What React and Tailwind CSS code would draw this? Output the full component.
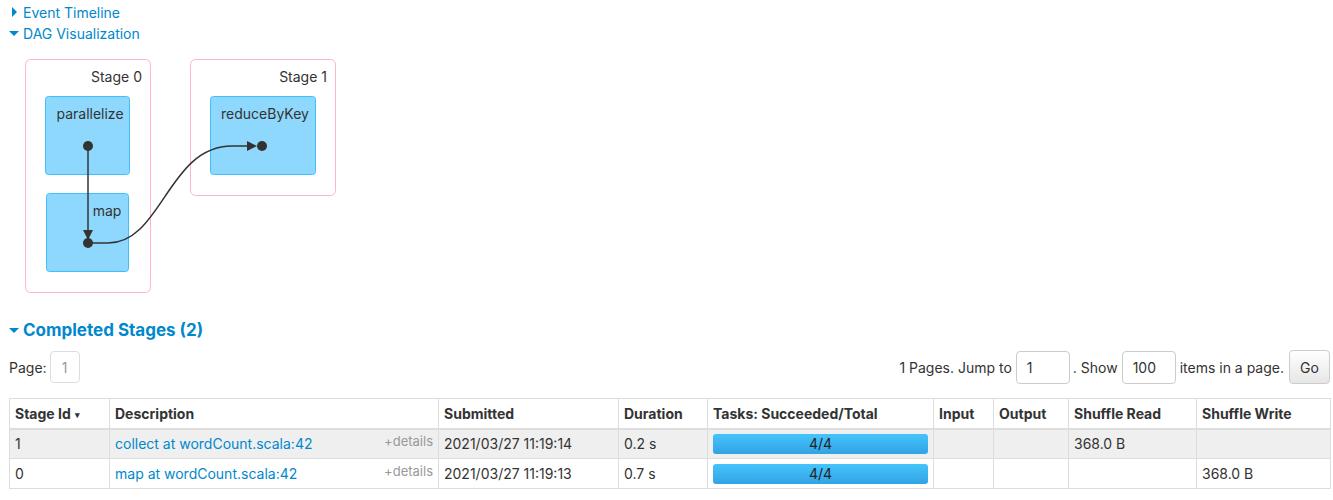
import { useState } from 'react';

const COLS = [
  { label: 'Stage Id', w: 'w-[100px]', sort: true },
  { label: 'Description', w: 'w-[329px]' },
  { label: 'Submitted', w: 'w-[180px]' },
  { label: 'Duration', w: 'w-[89px]' },
  { label: 'Tasks: Succeeded/Total', w: 'w-[226px]' },
  { label: 'Input', w: 'w-[60px]' },
  { label: 'Output', w: 'w-[75px]' },
  { label: 'Shuffle Read', w: 'w-[128px]' },
  { label: 'Shuffle Write', w: 'w-[134px]' },
];

const ROWS = [
  { id: '1', desc: 'collect at wordCount.scala:42', submitted: '2021/03/27 11:19:14', duration: '0.2 s', tasks: '4/4', read: '368.0 B', write: '' },
  { id: '0', desc: 'map at wordCount.scala:42', submitted: '2021/03/27 11:19:13', duration: '0.7 s', tasks: '4/4', read: '', write: '368.0 B' },
];

function Caret({ open }) {
  return open ? (
    <span className="inline-block w-0 h-0 border-l-[5px] border-r-[5px] border-t-[5px] border-l-transparent border-r-transparent border-t-[#0088cc]" />
  ) : (
    <span className="inline-block w-0 h-0 border-t-[5px] border-b-[5px] border-l-[5px] border-t-transparent border-b-transparent border-l-[#0088cc]" />
  );
}

function Dag() {
  return (
    <svg width="345" height="240" viewBox="9 55 345 240" className="block" style={{ fontFamily: 'Inter, sans-serif' }}>
      {/* stage clusters */}
      <rect x="25.5" y="59.5" width="125" height="233" rx="5" fill="#fff" stroke="#ffb6c4" />
      <rect x="190.5" y="59.5" width="145" height="136" rx="5" fill="#fff" stroke="#ffb6c4" />
      <text x="142" y="82" textAnchor="end" fontSize="14" fill="#333">Stage 0</text>
      <text x="327" y="82" textAnchor="end" fontSize="14" fill="#333">Stage 1</text>
      {/* rdd nodes */}
      <rect x="45.5" y="96.5" width="84" height="78" rx="3" fill="#8fd8fd" stroke="#3ec0ff" />
      <rect x="46.5" y="193.5" width="82" height="78" rx="3" fill="#8fd8fd" stroke="#3ec0ff" />
      <rect x="210.5" y="96.5" width="105" height="78" rx="3" fill="#8fd8fd" stroke="#3ec0ff" />
      <text x="90" y="119" textAnchor="middle" fontSize="14" fill="#333">parallelize</text>
      <text x="107" y="216" textAnchor="middle" fontSize="14" fill="#333">map</text>
      <text x="265" y="119" textAnchor="middle" fontSize="14" fill="#333">reduceByKey</text>
      {/* edges */}
      <path d="M88 146 L88 232" stroke="#333" strokeWidth="1.5" fill="none" />
      <path d="M83 230 L93 230 L88 240 Z" fill="#333" />
      <path d="M88 243 L108 243 C162 243 168 146 232 146 L249 146" stroke="#333" strokeWidth="1.5" fill="none" />
      <path d="M247 141 L257 146 L247 151 Z" fill="#333" />
      <circle cx="88" cy="146" r="5" fill="#333" />
      <circle cx="88" cy="243" r="5" fill="#333" />
      <circle cx="262" cy="146" r="5" fill="#333" />
    </svg>
  );
}

export default function App() {
  const [jump, setJump] = useState('1');
  const [size, setSize] = useState('100');

  return (
    <div className="min-h-screen bg-white pl-[9px] pr-[3px] text-[14px] text-[#333]" style={{ fontFamily: 'Inter, "Noto Sans", sans-serif' }}>
      <div className="pt-[3px] flex flex-col gap-[3px]">
        <a href="#" className="flex items-center gap-[6px] pl-[3px] h-[18px] text-[#0088cc]">
          <Caret open={false} />
          <span>Event Timeline</span>
        </a>
        <a href="#" className="flex items-center gap-[4px] h-[18px] text-[#0088cc]">
          <Caret open />
          <span>DAG Visualization</span>
        </a>
      </div>

      <div className="mt-[13px]">
        <Dag />
      </div>

      <h4 className="mt-[24px] flex items-center gap-[4px] text-[17px] font-bold text-[#0088cc] leading-[22px]">
        <Caret open />
        <span>Completed Stages (2)</span>
      </h4>

      <div className="mt-[9px] flex items-center justify-between">
        <div className="flex items-center gap-[3px]">
          <span>Page:</span>
          <span className="w-[30px] h-[32px] flex items-center justify-center border border-[#ddd] rounded-[4px] text-[#999]">1</span>
        </div>
        <div className="flex items-center">
          <span>1 Pages. Jump to</span>
          <input value={jump} onChange={(e) => setJump(e.target.value)} className="ml-[4px] w-[54px] h-[33px] px-[10px] border border-[#ccc] rounded-[4px] text-[14px] outline-none" />
          <span className="ml-[3px]">. Show</span>
          <input value={size} onChange={(e) => setSize(e.target.value)} className="ml-[4px] w-[54px] h-[33px] px-[10px] border border-[#ccc] rounded-[4px] text-[14px] outline-none" />
          <span className="ml-[4px]">items in a page.</span>
          <button className="ml-[5px] w-[41px] h-[34px] border border-[#ccc] rounded-[4px] bg-gradient-to-b from-white to-[#e6e6e6] text-[#333]">Go</button>
        </div>
      </div>

      <table className="mt-[14px] w-[1321px] table-fixed border-collapse border border-[#ddd]">
        <thead>
          <tr className="h-[30px]">
            {COLS.map((c) => (
              <th key={c.label} className={`${c.w} px-[5px] text-left font-bold border border-[#ddd] border-b-2 align-middle`}>
                {c.label}
                {c.sort && <span className="ml-[4px] text-[9px] align-middle">▾</span>}
              </th>
            ))}
          </tr>
        </thead>
        <tbody>
          {ROWS.map((r, i) => (
            <tr key={r.id} className={`h-[30px] ${i === 0 ? 'bg-[#efefef]' : 'bg-white'}`}>
              <td className="px-[5px] border border-[#ddd]">{r.id}</td>
              <td className="px-[5px] border border-[#ddd]">
                <div className="flex items-center justify-between">
                  <a href="#" className="text-[#0088cc]">{r.desc}</a>
                  <span className="text-[13px] text-[#999] -mt-[4px]">+details</span>
                </div>
              </td>
              <td className="px-[5px] border border-[#ddd]">{r.submitted}</td>
              <td className="px-[5px] border border-[#ddd]">{r.duration}</td>
              <td className="px-[5px] border border-[#ddd]">
                <div className="h-[20px] rounded-[3px] bg-gradient-to-b from-[#45c4fc] to-[#32a3e4] flex items-center justify-center text-[#222]">
                  {r.tasks}
                </div>
              </td>
              <td className="px-[5px] border border-[#ddd]"></td>
              <td className="px-[5px] border border-[#ddd]"></td>
              <td className="px-[5px] border border-[#ddd]">{r.read}</td>
              <td className="px-[5px] border border-[#ddd]">{r.write}</td>
            </tr>
          ))}
        </tbody>
      </table>
    </div>
  );
}
